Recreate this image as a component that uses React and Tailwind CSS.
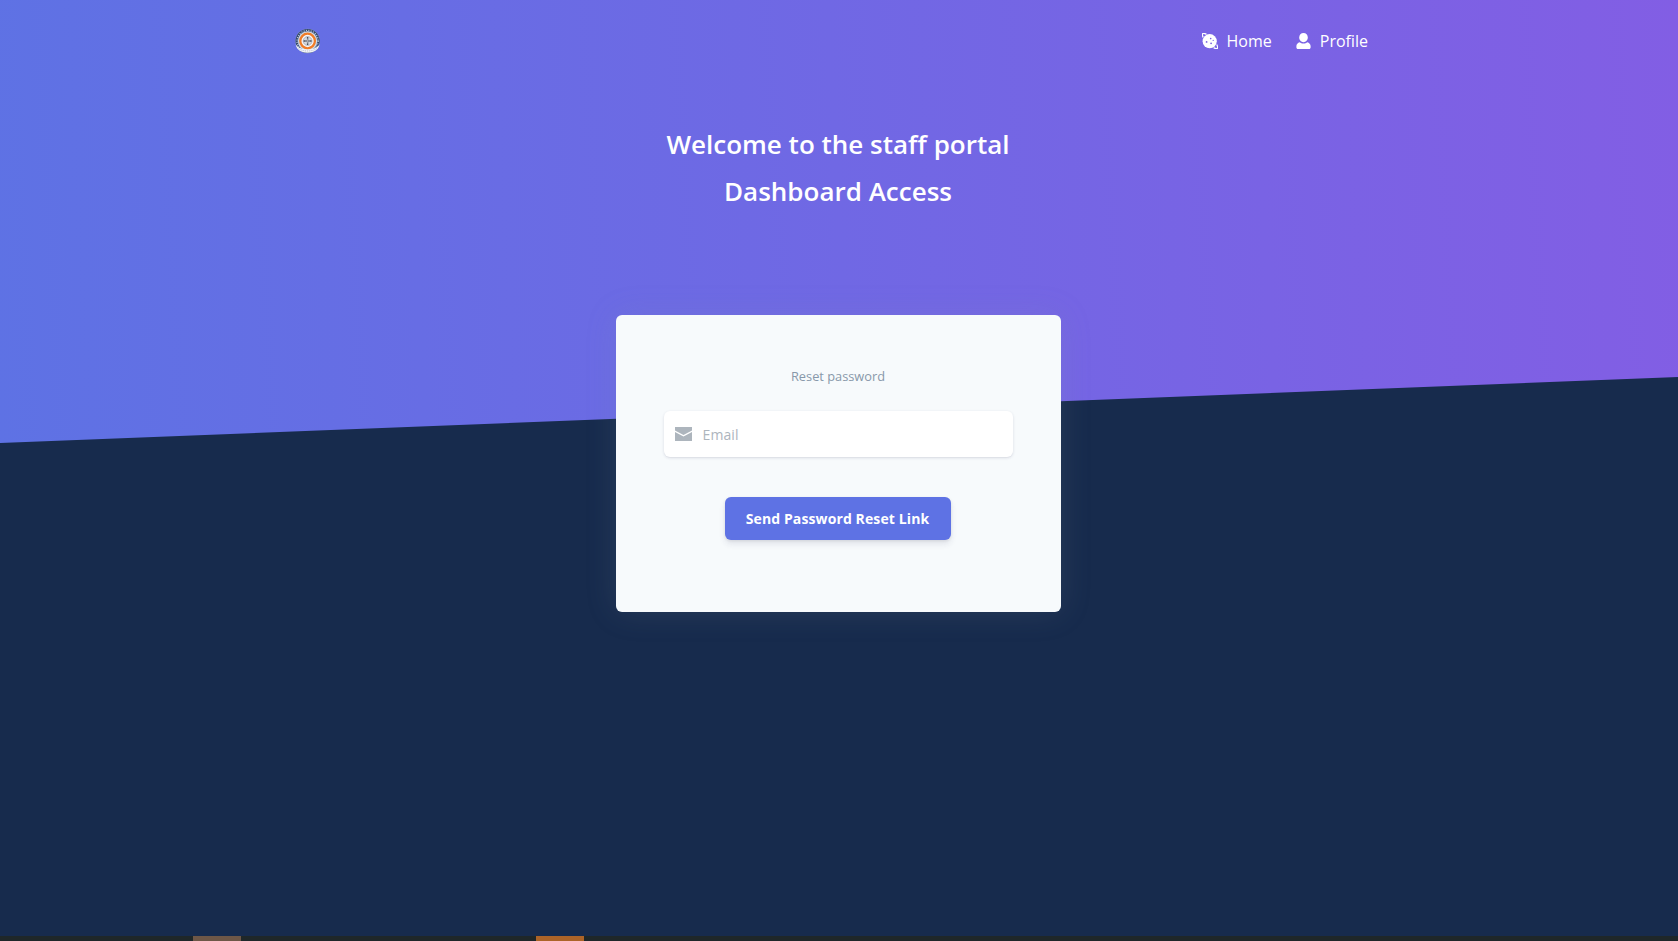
import React from 'react';

function Seal() {
  return (
    <svg className="h-[26px] w-[26px]" viewBox="0 0 26 26">
      <circle cx="12.600" cy="13" r="12.200" fill="#8d9bb5" />
      <circle cx="12.600" cy="13" r="11" fill="none" stroke="#33486e" strokeWidth="2" />
      <circle cx="12.600" cy="13" r="10.600" fill="none" stroke="#c3ccdc" strokeWidth="1.200" strokeDasharray="1 1.400" />
      <circle cx="12.600" cy="13" r="9.500" fill="#cfe0ec" />
      <circle cx="12.600" cy="13" r="7.300" fill="#f8f8f8" stroke="#f07c28" strokeWidth="2.300" />
      <circle cx="12.600" cy="13" r="4.400" fill="#d5d8de" stroke="#a2a8b2" strokeWidth=".8" />
      <path d="M12.600 9v8M8.600 13h8" stroke="#4d535e" strokeWidth="1.300" />
      <path d="M12.600 10.500v5M10.100 13h5" stroke="#e8eaf0" strokeWidth=".5" />
      <path d="M.6 16.200c1.300 2.200 3.700 3.600 6 4.400 3.500 1.200 8.500 1.200 12 0 2.300-.8 4.700-2.200 6-4.400-.3 1.700-.9 3.100-1.700 4.300-5 5.800-15.600 5.800-20.600 0-.8-1.200-1.400-2.600-1.700-4.300z" fill="#f4f6fb" />
      <path d="M3.500 20.600c5 3.200 13.200 3.200 18.200 0" fill="none" stroke="#b4bccd" strokeWidth=".9" strokeDasharray="1.300 .9" />
    </svg>
  );
}

function PlanetIcon() {
  return (
    <svg className="h-4 w-4" viewBox="0 0 16 16" fill="none">
      <circle cx="7.700" cy="8.200" r="7.100" fill="white" />
      <path d="M4.500 1.300C2.500.3 1.200.2.700.7.200 1.200.3 2.500 1.200 4.500M14.700 11.500c1 2 1.200 3.300.7 3.800-.5.500-1.800.4-3.800-.6" stroke="white" strokeWidth="1.300" />
      <g fill="#7a62e2">
        <circle cx="8.700" cy="5.600" r=".8" />
        <circle cx="4.600" cy="8.900" r=".9" />
        <circle cx="9.100" cy="10.300" r=".9" />
        <circle cx="11.200" cy="7.400" r=".6" />
      </g>
    </svg>
  );
}

function PersonIcon() {
  return (
    <svg className="h-4 w-4" viewBox="0 0 16 16" fill="white">
      <path d="M7.500 0c2.600 0 4.300 2 4.300 4.500S10 9.200 7.500 9.200 3.200 7 3.200 4.500 4.900 0 7.500 0z" />
      <path d="M3.700 9.200C4.700 10.100 6 10.600 7.500 10.600s2.800-.5 3.800-1.400c1.900.4 3.300 2 3.300 3.900V14.500c0 .8-.7 1.500-1.500 1.500H1.900C1.100 16 .4 15.300.4 14.500v-1.400c0-1.900 1.400-3.500 3.300-3.900z" />
    </svg>
  );
}

function MailIcon() {
  return (
    <svg className="h-[14px] w-[17px]" viewBox="0 0 17 14" fill="#adb5bd">
      <path d="M0 0h17v3.600L8.500 8.100 0 3.600z" />
      <path d="M0 4.900l8.500 4.500L17 4.900V14H0z" />
    </svg>
  );
}

export default function App() {
  return (
    <div className="relative isolate flex h-[941px] w-full flex-col overflow-hidden bg-[#172b4d] font-['Open_Sans',sans-serif] text-base text-white">
      <div className="absolute inset-x-0 top-0 -z-10 h-[443px] bg-[linear-gradient(87deg,#5e72e4_0%,#825ee4_100%)] [clip-path:polygon(0_0,100%_0,100%_377px,0_100%)]" />

      <nav className="mx-auto flex h-[82px] w-[1086px] shrink-0 items-center justify-between pr-[14px]">
        <a href="#" className="-ml-px"><Seal /></a>
        <div className="flex items-center gap-6">
          <a href="#" className="flex items-center gap-[9px]">
            <PlanetIcon />
            <span>Home</span>
          </a>
          <a href="#" className="flex items-center gap-2">
            <PersonIcon />
            <span>Profile</span>
          </a>
        </div>
      </nav>

      <header className="mt-[39px] flex shrink-0 flex-col items-center pr-[2px] text-[26px] leading-[47px] font-semibold">
        <h1>Welcome to the staff portal</h1>
        <h1>Dashboard Access</h1>
      </header>

      <main className="mr-[617px] ml-auto mt-[100px] flex h-[297px] w-[445px] shrink-0 flex-col items-center rounded-md bg-[#f7fafc] px-12 pt-[51px] shadow-[0_0_32px_0_rgba(136,152,170,0.15)]">
        <p className="pr-px text-[12.8px] leading-[21px] text-[#8898aa]">Reset password</p>
        <label className="mt-6 flex h-[46px] w-full items-center rounded-md bg-white pl-[11px] shadow-[0_1px_3px_rgba(50,50,93,0.15),0_1px_0_rgba(0,0,0,0.02)]">
          <MailIcon />
          <input type="email" placeholder="Email" className="ml-[10.5px] min-w-0 flex-1 pt-[2px] text-sm tracking-[0.1px] text-[#8898aa] outline-none placeholder:text-[#adb5bd]" />
        </label>
        <button className="mt-10 mr-[2px] h-[43px] w-[226px] rounded-md bg-[#5e72e4] text-sm font-bold tracking-[0.11px] whitespace-nowrap shadow-[0_4px_6px_rgba(50,50,93,0.11),0_1px_3px_rgba(0,0,0,0.08)]">
          Send Password Reset Link
        </button>
      </main>

      <div className="mt-auto flex h-[5px] shrink-0 bg-[#1f2729]">
        <div className="ml-[193px] w-12 bg-[#6e5747]" />
        <div className="ml-[295px] w-12 bg-[#ad6428]" />
      </div>
    </div>
  );
}
